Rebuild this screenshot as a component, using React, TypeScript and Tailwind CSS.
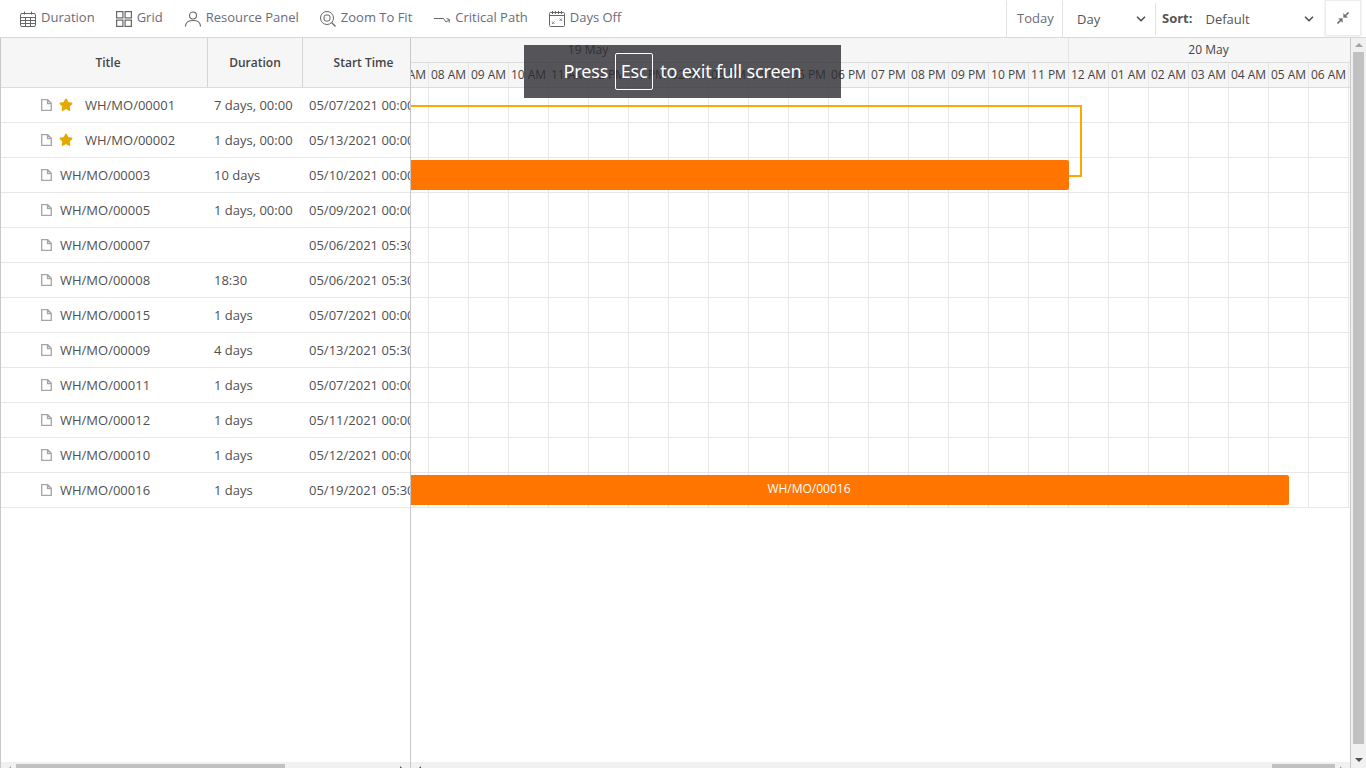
import { ChevronDown, Star } from "lucide-react";

const rows = [
  { title: "WH/MO/00001", duration: "7 days, 00:00", start: "05/07/2021 00:00:00", star: true },
  { title: "WH/MO/00002", duration: "1 days, 00:00", start: "05/13/2021 00:00:00", star: true },
  { title: "WH/MO/00003", duration: "10 days", start: "05/10/2021 00:00:00" },
  { title: "WH/MO/00005", duration: "1 days, 00:00", start: "05/09/2021 00:00:00" },
  { title: "WH/MO/00007", duration: "", start: "05/06/2021 05:30:00" },
  { title: "WH/MO/00008", duration: "18:30", start: "05/06/2021 05:30:00" },
  { title: "WH/MO/00015", duration: "1 days", start: "05/07/2021 00:00:00" },
  { title: "WH/MO/00009", duration: "4 days", start: "05/13/2021 05:30:00" },
  { title: "WH/MO/00011", duration: "1 days", start: "05/07/2021 00:00:00" },
  { title: "WH/MO/00012", duration: "1 days", start: "05/11/2021 00:00:00" },
  { title: "WH/MO/00010", duration: "1 days", start: "05/12/2021 00:00:00" },
  { title: "WH/MO/00016", duration: "1 days", start: "05/19/2021 05:30:00" },
];

const hours = [
  "07 AM", "08 AM", "09 AM", "10 AM", "11 AM", "12 PM", "01 PM", "02 PM", "03 PM", "04 PM", "05 PM", "06 PM",
  "07 PM", "08 PM", "09 PM", "10 PM", "11 PM", "12 AM", "01 AM", "02 AM", "03 AM", "04 AM", "05 AM", "06 AM", "07 AM",
];

function CalendarIcon() {
  return (
    <svg width="16" height="16" viewBox="0 0 16 16" fill="none" stroke="#666" strokeWidth="1">
      <rect x="0.5" y="2.5" width="15" height="13" rx="1.5" />
      <path d="M0.5 6.5h15M0.5 9.5h15M0.5 12.5h15M5.5 6.5v9M10.5 6.5v9M4.5 0.5v3M11.500 0.5v3" />
    </svg>
  );
}

function GridIcon() {
  return (
    <svg width="16" height="16" viewBox="0 0 16 16" fill="none" stroke="#666" strokeWidth="1.2">
      <rect x="0.6" y="0.6" width="6.300" height="6.300" />
      <rect x="9.100" y="0.6" width="6.300" height="6.300" />
      <rect x="0.6" y="9.100" width="6.300" height="6.300" />
      <rect x="9.100" y="9.100" width="6.300" height="6.300" />
    </svg>
  );
}

function PersonIcon() {
  return (
    <svg width="16" height="16" viewBox="0 0 16 16" fill="none" stroke="#666" strokeWidth="1.1">
      <circle cx="8" cy="4.5" r="3.5" />
      <path d="M0.5 15.5c0-4 3-6 7.5-6s7.5 2 7.5 6" />
    </svg>
  );
}

function ZoomIcon() {
  return (
    <svg width="16" height="16" viewBox="0 0 16 16" fill="none" stroke="#666" strokeWidth="1">
      <circle cx="7" cy="7" r="6.5" />
      <rect x="4" y="4" width="6" height="6" rx="2" />
      <path d="M11.500 11.500l4 4" strokeWidth="1.300" />
    </svg>
  );
}

function CriticalIcon() {
  return (
    <svg width="16" height="16" viewBox="0 0 16 16" fill="none" stroke="#666" strokeWidth="1">
      <path d="M0 7.500h9.500l2.500 3.500 3.500-2.500M12.500 7.500l3 1-0.500 3" />
    </svg>
  );
}

function DaysOffIcon() {
  return (
    <svg width="16" height="16" viewBox="0 0 16 16" fill="none" stroke="#666" strokeWidth="1">
      <rect x="0.5" y="1.5" width="15" height="14" rx="1" />
      <path d="M0.5 4.5h15M3.500 0v3M6.500 0v3M9.500 0v3M12.500 0v3" />
      <path d="M3 10.500l2.500 2.500M5.500 10.500l-2.500 2.500M10.500 7.500l2.500 2.500M13 7.500l-2.500 2.500" stroke="#888" />
    </svg>
  );
}

function FileIcon() {
  return (
    <svg width="11" height="12" viewBox="0 0 11 12" fill="none" stroke="#a6a6a6" strokeWidth="1.300" className="mb-[2px] shrink-0">
      <path d="M0.700 0.700h6l3.600 3.600v7h-9.600zM6.500 0.700v3.800h3.800" />
    </svg>
  );
}

function ToolbarItem({ icon, label, className }: { icon: React.ReactNode; label: string; className?: string }) {
  return (
    <div className={`flex items-center gap-[5px] ${className ?? ""}`}>
      {icon}
      <span className="mb-[1px]">{label}</span>
    </div>
  );
}

function Toolbar() {
  return (
    <div className="flex h-[38px] shrink-0 items-center border-b border-[#d9d9d9] bg-white text-[13px] text-[#6b6b78]">
      <div className="flex items-center gap-[21px] pl-[20px]">
        <ToolbarItem icon={<CalendarIcon />} label="Duration" />
        <ToolbarItem icon={<GridIcon />} label="Grid" />
        <ToolbarItem icon={<PersonIcon />} label="Resource Panel" className="ml-[1px]" />
        <ToolbarItem icon={<ZoomIcon />} label="Zoom To Fit" />
        <ToolbarItem icon={<CriticalIcon />} label="Critical Path" className="ml-[1px]" />
        <ToolbarItem icon={<DaysOffIcon />} label="Days Off" />
      </div>
      <div className="ml-auto flex h-full items-center">
        <div className="flex h-[36px] w-[56px] items-center border-l border-[#e2e2e2] pl-[10px]">Today</div>
        <div className="flex h-[36px] w-[93px] items-center border-l border-[#e2e2e2] pl-[14px] text-[#555]">
          <span className="mt-[2px]">Day</span>
          <ChevronDown size={14} strokeWidth={3} className="ml-auto mr-[7px] text-[#555]" />
        </div>
        <div className="flex h-[32px] w-[170px] items-center border-l border-[#e2e2e2] pl-[6px] text-[#555]">
          <span className="font-bold">Sort:</span>
          <span className="ml-[13px] mt-[2px]">Default</span>
          <ChevronDown size={14} strokeWidth={3} className="ml-auto mr-[9px] text-[#555]" />
        </div>
        <div className="mb-[2px] flex h-[36px] w-[36px] items-center justify-center border border-[#ececec] bg-white shadow-[0_0_2px_#ddd]">
          <svg width="12" height="12" viewBox="0 0 12 12" fill="#707070" stroke="#707070">
            <path d="M11.500 0.500L7.500 4.500M0.500 11.500l4-4" strokeWidth="1.600" />
            <path d="M6.500 1.500v4h4zM1.500 6.500h4v4z" strokeWidth="0.300" />
          </svg>
        </div>
        <div className="w-[5px]" />
      </div>
    </div>
  );
}

function BottomBar({ left, width, arrowLeft, arrowRight }: { left: number; width: number; arrowLeft: string; arrowRight: string }) {
  return (
    <div className="relative h-[6px] shrink-0 overflow-hidden bg-[#f1f1f1] pt-[2px]">
      <div className="h-[4px] bg-[#c1c1c1]" style={{ marginLeft: left, width }} />
      <div className={`absolute left-[6px] top-[4px] h-0 w-0 border-y-[4px] border-r-[4px] border-y-transparent ${arrowLeft}`} />
      <div className={`absolute right-[6px] top-[4px] h-0 w-0 border-y-[4px] border-l-[4px] border-y-transparent ${arrowRight}`} />
    </div>
  );
}

function LeftPanel() {
  return (
    <div className="flex w-[411px] shrink-0 flex-col border-x border-[#c8c8c8]">
      <div className="flex h-[50px] shrink-0 border-b border-[#dcdcdc] bg-[#f6f6f6] text-[12px] font-semibold text-[#444]">
        <div className="flex w-[207px] items-center justify-center border-r border-[#d4d4d4] pl-[8px]">Title</div>
        <div className="flex w-[95px] items-center justify-center border-r border-[#d4d4d4]">Duration</div>
        <div className="flex flex-1 items-center justify-center pl-[14px]">Start Time</div>
      </div>
      <div className="flex-1 overflow-hidden">
        {rows.map((row) => (
          <div key={row.title} className="flex h-[35px] items-center border-b border-[#e8e8e8] pt-[1px] text-[13px] text-[#505050]">
            <div className="flex w-[207px] shrink-0 items-center pl-[40px]">
              <FileIcon />
              {row.star && <Star size={14} className="ml-[7px] mb-[1px] fill-[#e5a800] text-[#e5a800]" />}
              <span className={row.star ? "ml-[12px]" : "ml-[8px]"}>{row.title}</span>
            </div>
            <div className="w-[95px] shrink-0 pl-[6px] whitespace-nowrap">{row.duration}</div>
            <div className="pl-[6px] whitespace-nowrap">{row.start}</div>
          </div>
        ))}
      </div>
      <BottomBar left={15} width={269} arrowLeft="border-r-[#a3a3a3]" arrowRight="border-l-[#505050]" />
    </div>
  );
}

function Timeline() {
  return (
    <div className="flex min-w-0 flex-1 flex-col">
      <div className="flex h-[25px] shrink-0 border-b border-[#dcdcdc] bg-[#f6f6f6] text-[12px] text-[#444]">
        <div className="ml-[-303px] flex w-[961px] shrink-0 items-center justify-center border-r border-[#e4e4e4]">19 May</div>
        <div className="flex flex-1 items-center justify-center pr-[2px]">20 May</div>
      </div>
      <div className="flex h-[25px] shrink-0 overflow-hidden border-b border-[#dcdcdc] bg-[#f6f6f6] text-[12px] text-[#444]">
        {hours.map((hour, i) => (
          <div key={i} className={`flex h-full w-[40px] shrink-0 items-center justify-center whitespace-nowrap border-r border-[#e8e8e8] ${i === 0 ? "ml-[-22px]" : ""}`}>
            {hour}
          </div>
        ))}
      </div>
      <div className="relative min-h-0 flex-1 overflow-hidden">
        {rows.map((row) => (
          <div key={row.title} className="flex h-[35px] overflow-hidden border-b border-[#e8e8e8]">
            {hours.map((_, i) => (
              <div key={i} className={`h-full w-[40px] shrink-0 border-r border-[#e8e8e8] ${i === 0 ? "ml-[-22px]" : ""}`} />
            ))}
          </div>
        ))}
        <div className="absolute left-0 top-[17px] h-[72px] w-[671px] border-y-2 border-r-2 border-[#ffa600]" />
        <div className="absolute left-0 top-[72px] h-[30px] w-[658px] rounded-r-[2px] bg-[#ff7500]" />
        <div className="absolute left-[-82px] top-[387px] flex h-[30px] w-[960px] items-center justify-center rounded-[2px] bg-[#ff7500] pb-[2px] text-[12px] text-white">
          WH/MO/00016
        </div>
      </div>
      <BottomBar left={861} width={63} arrowLeft="border-r-[#505050]" arrowRight="border-l-[#a3a3a3]" />
    </div>
  );
}

function VerticalBar() {
  return (
    <div className="flex w-[16px] shrink-0 flex-col items-center border-l border-[#c8c8c8] bg-[#f1f1f1]">
      <div className="mt-[5px] h-0 w-0 border-x-[4px] border-b-[4px] border-x-transparent border-b-[#a3a3a3]" />
      <div className="mt-[5px] w-[11px] flex-1 bg-[#c1c1c1]" />
      <div className="mb-[6px] mt-[14px] h-0 w-0 border-x-[4px] border-t-[4px] border-x-transparent border-t-[#505050]" />
    </div>
  );
}

export default function App() {
  return (
    <main className="relative flex h-screen w-full flex-col overflow-hidden bg-white font-['Open_Sans',sans-serif]">
      <Toolbar />
      <div className="flex min-h-0 flex-1">
        <LeftPanel />
        <Timeline />
        <VerticalBar />
      </div>
      <div className="absolute left-[524px] top-[45px] flex h-[53px] w-[317px] items-center justify-center gap-[7px] bg-[#2c2c32]/80 text-[18px] tracking-[-0.16px] text-white font-['Noto_Sans',sans-serif]">
        <span>Press</span>
        <span className="flex h-[37px] w-[38px] items-center justify-center rounded-[2px] border border-white">Esc</span>
        <span>to exit full screen</span>
      </div>
    </main>
  );
}
